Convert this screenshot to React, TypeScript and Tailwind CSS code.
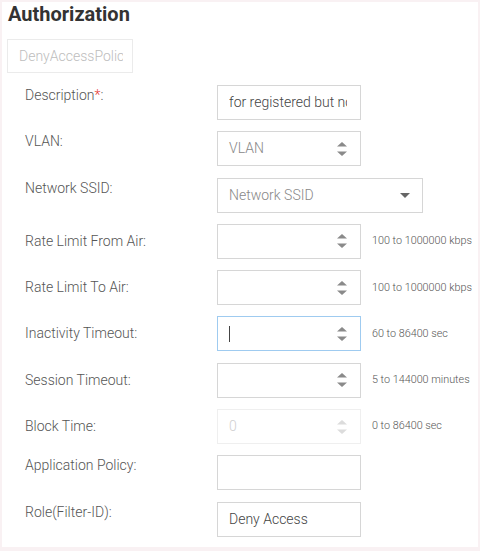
import React from 'react';

function Spinner({ faded = false }: { faded?: boolean }) {
  const fill = faded ? '#dcdcdc' : '#8a8a8a';
  return (
    <svg width="10" height="14" viewBox="0 0 10 14" className="shrink-0">
      <path d="M0 4.5 L5 0 L10 4.5 Z" fill={fill} />
      <path d="M0 9.5 L10 9.5 L5 14 Z" fill={fill} />
    </svg>
  );
}

interface RowProps {
  label: React.ReactNode;
  hint?: string;
  children: React.ReactNode;
}

function Row({ label, hint, children }: RowProps) {
  return (
    <div className={`flex ${hint ? 'items-center' : 'items-start'} h-[35px]`}>
      <div className="w-[192px] shrink-0 text-[14px] leading-[21px] font-light text-[#555]">{label}</div>
      {children}
      {hint && <div className="ml-[11px] text-[10.8px] font-light text-[#555] whitespace-nowrap">{hint}</div>}
    </div>
  );
}

function Box({
  children,
  className = '',
}: {
  children?: React.ReactNode;
  className?: string;
}) {
  return (
    <div
      className={`h-[35px] w-[144px] shrink-0 border flex items-center pl-[11px] pr-[13px] text-[14px] font-light ${className}`}
    >
      {children}
    </div>
  );
}

export default function App() {
  return (
    <div
      className="w-[480px] h-[551px] bg-[#f9f1f3] pt-[2px] pl-[2px] pr-[2px] pb-[4px]"
      style={{ fontFamily: 'Roboto, "Liberation Sans", sans-serif' }}
    >
      <div className="h-full bg-white overflow-hidden">
        <h1 className="pl-[6px] text-[20px] leading-[24px] font-bold text-[#333]">Authorization</h1>

        <div className="mt-[13px] ml-[5px] w-[126px] h-[34px] border border-[#ebebeb] flex items-center pl-[11px] pr-[9px]">
          <div className="overflow-hidden">
            <span className="text-[14px] font-light text-[#bdbdbd] whitespace-nowrap">DenyAccessPolicy</span>
          </div>
        </div>

        <div className="mt-[12px] pl-[23px] flex flex-col gap-[11.3px]">
          <Row
            label={
              <span>
                Description<span className="text-[#e53935]">*</span>:
              </span>
            }
          >
            <Box className="border-[#d6d6d6] text-[#444] pr-[10px]">
              <div className="overflow-hidden">
                <span className="whitespace-nowrap">for registered but not</span>
              </div>
            </Box>
          </Row>

          <Row label="VLAN:">
            <Box className="border-[#d6d6d6] text-[#888] justify-between">
              <span>VLAN</span>
              <Spinner />
            </Box>
          </Row>

          <Row label="Network SSID:">
            <div className="h-[35px] w-[206px] shrink-0 border border-[#d6d6d6] flex items-center justify-between pl-[11px] pr-[12px] text-[14px] font-light text-[#888]">
              <span>Network SSID</span>
              <svg width="10" height="5" viewBox="0 0 10 5">
                <path d="M0 0 L10 0 L5 5 Z" fill="#666" />
              </svg>
            </div>
          </Row>

          <Row label="Rate Limit From Air:" hint="100 to 1000000 kbps">
            <Box className="border-[#d6d6d6] justify-end">
              <Spinner />
            </Box>
          </Row>

          <Row label="Rate Limit To Air:" hint="100 to 1000000 kbps">
            <Box className="border-[#d6d6d6] justify-end">
              <Spinner />
            </Box>
          </Row>

          <Row label="Inactivity Timeout:" hint="60 to 86400 sec">
            <Box className="border-[#9fcbf0] justify-between">
              <span className="block w-px h-[16px] bg-[#444]" />
              <Spinner />
            </Box>
          </Row>

          <Row label="Session Timeout:" hint="5 to 144000 minutes">
            <Box className="border-[#d6d6d6] justify-end">
              <Spinner />
            </Box>
          </Row>

          <Row label="Block Time:" hint="0 to 86400 sec">
            <Box className="border-[#efefef] text-[#d0d0d0] justify-between">
              <span>0</span>
              <Spinner faded />
            </Box>
          </Row>

          <Row label="Application Policy:">
            <Box className="border-[#d6d6d6]" />
          </Row>

          <Row label="Role(Filter-ID):">
            <Box className="border-[#d6d6d6] text-[#444]">
              <span>Deny Access</span>
            </Box>
          </Row>
        </div>
      </div>
    </div>
  );
}
